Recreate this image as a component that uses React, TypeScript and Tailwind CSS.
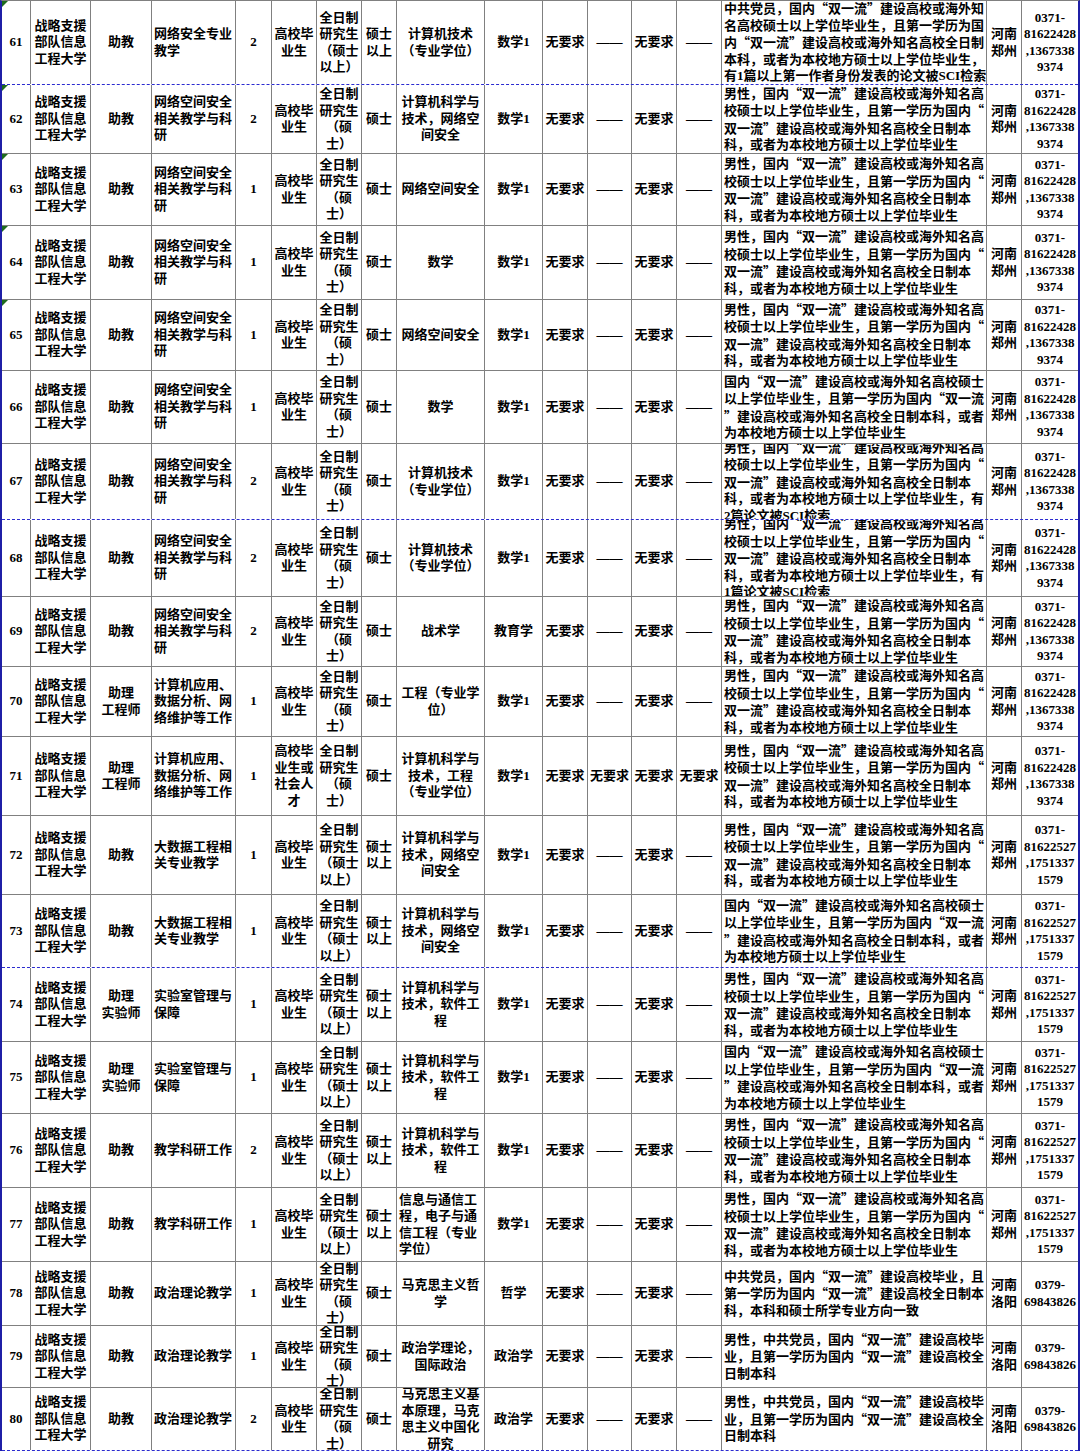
const UNIT = ['战略支援', '部队信息', '工程大学'];
const SRC = ['高校毕', '业生'];
const EDU_A = ['全日制', '研究生', '（硕士', '以上）'];
const EDU_B = ['全日制', '研究生', '（硕', '士）'];
const DESC_NET = ['网络空间安全', '相关教学与科', '研'];
const DESC_APP = ['计算机应用、', '数据分析、网', '络维护等工作'];
const CS_NET = ['计算机科学与', '技术，网络空', '间安全'];
const CS_SE = ['计算机科学与', '技术，软件工', '程'];
const CT = ['计算机技术', '（专业学位）'];
const LOC_ZZ = ['河南', '郑州'];
const LOC_LY = ['河南', '洛阳'];
const PH_1 = ['0371-', '81622428', ',1367338', '9374'];
const PH_2 = ['0371-', '81622527', ',1751337', '1579'];
const PH_LY = ['0379-', '69843826'];

const N_A = [
  '男性，国内“双一流”建设高校或海外知名高',
  '校硕士以上学位毕业生，且第一学历为国内“',
  '双一流”建设高校或海外知名高校全日制本',
  '科，或者为本校地方硕士以上学位毕业生',
];
const N_B = [
  '国内“双一流”建设高校或海外知名高校硕士',
  '以上学位毕业生，且第一学历为国内“双一流',
  '”建设高校或海外知名高校全日制本科，或者',
  '为本校地方硕士以上学位毕业生',
];
const N_61 = [
  '中共党员，国内“双一流”建设高校或海外知',
  '名高校硕士以上学位毕业生，且第一学历为国',
  '内“双一流”建设高校或海外知名高校全日制',
  '本科，或者为本校地方硕士以上学位毕业生，',
  '有1篇以上第一作者身份发表的论文被SCI检索',
];
const N_SCI = (k: string) => [
  N_A[0],
  N_A[1],
  N_A[2],
  '科，或者为本校地方硕士以上学位毕业生，有',
  `${k}篇论文被SCI检索`,
];
const N_78 = [
  '中共党员，国内“双一流”建设高校毕业，且',
  '第一学历为国内“双一流”建设高校全日制本',
  '科，本科和硕士所学专业方向一致',
];
const N_79 = [
  '男性，中共党员，国内“双一流”建设高校毕',
  '业，且第一学历为国内“双一流”建设高校全',
  '日制本科',
];

type Row = {
  n: number;
  h: string;
  dashed?: boolean;
  tri?: boolean;
  pos: string[];
  desc: string[];
  cnt: string;
  src: string[];
  edu: string[];
  deg: string[];
  major: string[];
  majorLeft?: boolean;
  exam: string;
  r: string[];
  notes: string[];
  loc: string[];
  phone: string[];
};

const STD = ['无要求', '——', '无要求', '——'];
const ALL = ['无要求', '无要求', '无要求', '无要求'];

const rows: Row[] = [
  { n: 61, h: 'h-[84px]', dashed: true, tri: true, pos: ['助教'], desc: ['网络安全专业', '教学'], cnt: '2', src: SRC, edu: EDU_A, deg: ['硕士', '以上'], major: CT, exam: '数学1', r: STD, notes: N_61, loc: LOC_ZZ, phone: PH_1 },
  { n: 62, h: 'h-[69px]', tri: true, pos: ['助教'], desc: DESC_NET, cnt: '2', src: SRC, edu: EDU_B, deg: ['硕士'], major: CS_NET, exam: '数学1', r: STD, notes: N_A, loc: LOC_ZZ, phone: PH_1 },
  { n: 63, h: 'h-[72px]', tri: true, pos: ['助教'], desc: DESC_NET, cnt: '1', src: SRC, edu: EDU_B, deg: ['硕士'], major: ['网络空间安全'], exam: '数学1', r: STD, notes: N_A, loc: LOC_ZZ, phone: PH_1 },
  { n: 64, h: 'h-[74px]', tri: true, pos: ['助教'], desc: DESC_NET, cnt: '1', src: SRC, edu: EDU_B, deg: ['硕士'], major: ['数学'], exam: '数学1', r: STD, notes: N_A, loc: LOC_ZZ, phone: PH_1 },
  { n: 65, h: 'h-[71px]', tri: true, pos: ['助教'], desc: DESC_NET, cnt: '1', src: SRC, edu: EDU_B, deg: ['硕士'], major: ['网络空间安全'], exam: '数学1', r: STD, notes: N_A, loc: LOC_ZZ, phone: PH_1 },
  { n: 66, h: 'h-[73px]', pos: ['助教'], desc: DESC_NET, cnt: '1', src: SRC, edu: EDU_B, deg: ['硕士'], major: ['数学'], exam: '数学1', r: STD, notes: N_B, loc: LOC_ZZ, phone: PH_1 },
  { n: 67, h: 'h-[76px]', dashed: true, pos: ['助教'], desc: DESC_NET, cnt: '2', src: SRC, edu: EDU_B, deg: ['硕士'], major: CT, exam: '数学1', r: STD, notes: N_SCI('2'), loc: LOC_ZZ, phone: PH_1 },
  { n: 68, h: 'h-[77px]', pos: ['助教'], desc: DESC_NET, cnt: '2', src: SRC, edu: EDU_B, deg: ['硕士'], major: CT, exam: '数学1', r: STD, notes: N_SCI('1'), loc: LOC_ZZ, phone: PH_1 },
  { n: 69, h: 'h-[70px]', pos: ['助教'], desc: DESC_NET, cnt: '2', src: SRC, edu: EDU_B, deg: ['硕士'], major: ['战术学'], exam: '教育学', r: STD, notes: N_A, loc: LOC_ZZ, phone: PH_1 },
  { n: 70, h: 'h-[70px]', pos: ['助理', '工程师'], desc: DESC_APP, cnt: '1', src: SRC, edu: EDU_B, deg: ['硕士'], major: ['工程（专业学', '位）'], exam: '数学1', r: STD, notes: N_A, loc: LOC_ZZ, phone: PH_1 },
  { n: 71, h: 'h-[79px]', pos: ['助理', '工程师'], desc: DESC_APP, cnt: '1', src: ['高校毕', '业生或', '社会人', '才'], edu: EDU_B, deg: ['硕士'], major: ['计算机科学与', '技术，工程', '（专业学位）'], exam: '数学1', r: ALL, notes: N_A, loc: LOC_ZZ, phone: PH_1 },
  { n: 72, h: 'h-[79px]', pos: ['助教'], desc: ['大数据工程相', '关专业教学'], cnt: '1', src: SRC, edu: EDU_A, deg: ['硕士', '以上'], major: CS_NET, exam: '数学1', r: STD, notes: N_A, loc: LOC_ZZ, phone: PH_2 },
  { n: 73, h: 'h-[73px]', dashed: true, pos: ['助教'], desc: ['大数据工程相', '关专业教学'], cnt: '1', src: SRC, edu: EDU_A, deg: ['硕士', '以上'], major: CS_NET, exam: '数学1', r: STD, notes: N_B, loc: LOC_ZZ, phone: PH_2 },
  { n: 74, h: 'h-[74px]', pos: ['助理', '实验师'], desc: ['实验室管理与', '保障'], cnt: '1', src: SRC, edu: EDU_A, deg: ['硕士', '以上'], major: CS_SE, exam: '数学1', r: STD, notes: N_A, loc: LOC_ZZ, phone: PH_2 },
  { n: 75, h: 'h-[72px]', pos: ['助理', '实验师'], desc: ['实验室管理与', '保障'], cnt: '1', src: SRC, edu: EDU_A, deg: ['硕士', '以上'], major: CS_SE, exam: '数学1', r: STD, notes: N_B, loc: LOC_ZZ, phone: PH_2 },
  { n: 76, h: 'h-[74px]', pos: ['助教'], desc: ['教学科研工作'], cnt: '2', src: SRC, edu: EDU_A, deg: ['硕士', '以上'], major: CS_SE, exam: '数学1', r: STD, notes: N_A, loc: LOC_ZZ, phone: PH_2 },
  { n: 77, h: 'h-[74px]', pos: ['助教'], desc: ['教学科研工作'], cnt: '1', src: SRC, edu: EDU_A, deg: ['硕士', '以上'], major: ['信息与通信工', '程，电子与通', '信工程（专业', '学位）'], majorLeft: true, exam: '数学1', r: STD, notes: N_A, loc: LOC_ZZ, phone: PH_2 },
  { n: 78, h: 'h-[64px]', pos: ['助教'], desc: ['政治理论教学'], cnt: '1', src: SRC, edu: EDU_B, deg: ['硕士'], major: ['马克思主义哲', '学'], exam: '哲学', r: STD, notes: N_78, loc: LOC_LY, phone: PH_LY },
  { n: 79, h: 'h-[62px]', pos: ['助教'], desc: ['政治理论教学'], cnt: '1', src: SRC, edu: EDU_B, deg: ['硕士'], major: ['政治学理论，', '国际政治'], exam: '政治学', r: STD, notes: N_79, loc: LOC_LY, phone: PH_LY },
  { n: 80, h: 'h-[63px]', dashed: true, pos: ['助教'], desc: ['政治理论教学'], cnt: '2', src: SRC, edu: EDU_B, deg: ['硕士'], major: ['马克思主义基', '本原理，马克', '思主义中国化', '研究'], exam: '政治学', r: STD, notes: N_79, loc: LOC_LY, phone: PH_LY },
];

// curly quotes come from the CJK font so they stay full width
function Text({ s }: { s: string }) {
  const parts = s.split(/([“”])/);
  return (
    <>
      {parts.map((p, i) =>
        p === '“' || p === '”' ? (
          <span key={i} className="font-['Noto_Sans_CJK_SC',sans-serif]">
            {p}
          </span>
        ) : (
          <span key={i}>{p}</span>
        )
      )}
    </>
  );
}

function Cell({
  lines,
  left,
  last,
  children,
}: {
  lines: string[];
  left?: boolean;
  last?: boolean;
  children?: React.ReactNode;
}) {
  return (
    <div
      className={`relative flex items-center overflow-hidden px-[2px] ${
        left ? 'justify-start text-left' : 'justify-center text-center'
      } ${last ? '' : 'border-r border-[#808080]'}`}
    >
      {children}
      <div>
        {lines.map((l, i) => (
          <div key={i} className="whitespace-nowrap">
            <Text s={l} />
          </div>
        ))}
      </div>
    </div>
  );
}

export default function App() {
  return (
    <div className="w-[1080px] bg-white">
      <div className="border-l-2 border-r-2 border-t border-l-[#1f1fa6] border-r-[#1f1fa6] border-t-[#808080] font-['Liberation_Serif','Noto_Sans_CJK_SC',serif] text-[13px] leading-[16.5px] font-bold text-black">
        {rows.map((r) => (
          <div
            key={r.n}
            className={`${r.h} grid grid-cols-[29px_60px_61px_84px_36px_45px_45px_35px_88px_58px_45px_44px_45px_45px_265px_35px_56px] border-b ${
              r.dashed ? 'border-dashed border-[#2b2bd0]' : 'border-[#808080]'
            }`}
          >
            <Cell lines={[String(r.n)]}>
              {r.tri && (
                <span className="absolute left-0 top-0 h-0 w-0 border-r-[6px] border-t-[6px] border-r-transparent border-t-[#1e6b1e]" />
              )}
            </Cell>
            <Cell lines={UNIT} />
            <Cell lines={r.pos} />
            <Cell lines={r.desc} left />
            <Cell lines={[r.cnt]} />
            <Cell lines={r.src} />
            <Cell lines={r.edu} />
            <Cell lines={r.deg} />
            <Cell lines={r.major} left={r.majorLeft} />
            <Cell lines={[r.exam]} />
            <Cell lines={[r.r[0]]} />
            <Cell lines={[r.r[1]]} />
            <Cell lines={[r.r[2]]} />
            <Cell lines={[r.r[3]]} />
            <Cell lines={r.notes} left />
            <Cell lines={r.loc} />
            <Cell lines={r.phone} last />
          </div>
        ))}
      </div>
    </div>
  );
}
